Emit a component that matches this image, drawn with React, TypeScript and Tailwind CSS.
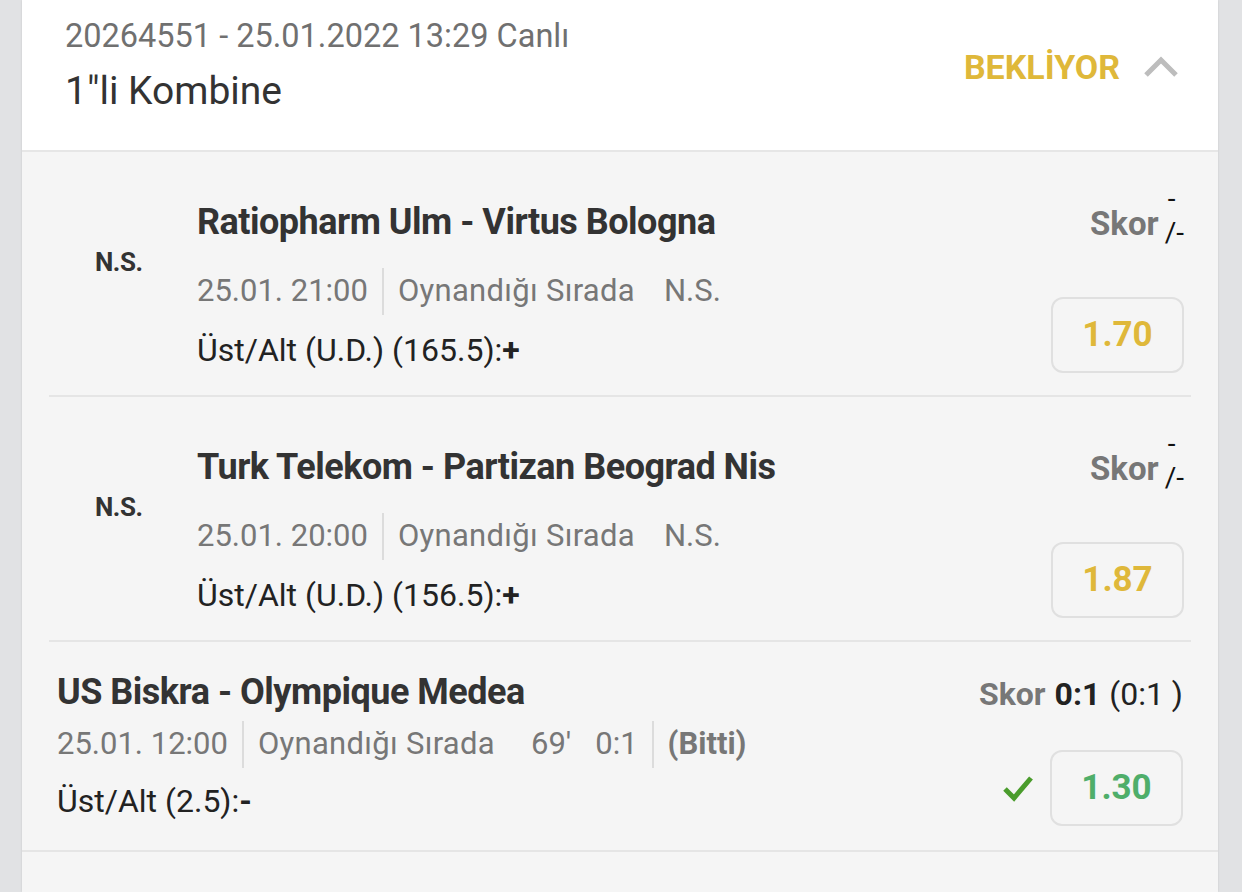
import React from 'react';

const gold = 'text-[#dfb83a]';

const Sep = () => <span className="mx-[14px] inline-block h-[47px] w-[2px] bg-[#dcdcdc]" />;

const Odds: React.FC<{ value: string; color: string }> = ({ value, color }) => (
  <div className={`flex h-[76px] w-[133px] items-center justify-center rounded-[12px] border-2 border-[#e0e0e0] text-[35px] font-bold ${color}`}>
    {value}
  </div>
);

const EmptyScore = () => (
  <div className="flex h-[40px] items-center justify-end">
    <span className="text-[33px] font-bold text-[#777]">Skor</span>
    <span className="ml-[6px] flex flex-col text-[28px] leading-[28px] text-[#111]">
      <span className="-mt-[16px] pl-[3px]">-</span>
      <span className="mt-[6px]">/-</span>
    </span>
  </div>
);

const PendingRow: React.FC<{ title: string; time: string; market: string; odds: string }> = ({ title, time, market, odds }) => (
  <div className="mx-[27px] flex h-[245px] border-b-2 border-[#e5e5e5]">
    <div className="w-[148px] pl-[46px] pt-[95px]">
      <span className="text-[26px] font-bold leading-[30px] tracking-[-0.5px] text-[#333]">N.S.</span>
    </div>
    <div className="flex-1 pt-[48px]">
      <div className="h-[44px] text-[36px] font-bold leading-[44px] tracking-[-0.5px] text-[#333]">{title}</div>
      <div className="mt-[22px] flex h-[50px] items-center text-[31px] text-[#777]">
        <span>{time}</span>
        <Sep />
        <span className="tracking-[0.3px]">Oynandığı Sırada</span>
        <span className="ml-[29px]">N.S.</span>
      </div>
      <div className="mt-[12px] h-[44px] text-[32px] leading-[44px] text-[#222]">
        {market}
        <span className="font-bold">+</span>
      </div>
    </div>
    <div className="flex flex-col items-end pr-[7px] pt-[52px]">
      <EmptyScore />
      <div className="mt-[53px]">
        <Odds value={odds} color={gold} />
      </div>
    </div>
  </div>
);

export default function App() {
  return (
    <div className="min-h-screen bg-[#e1e2e4] pl-[22px] pr-[24px]" style={{ fontFamily: 'Roboto, "Noto Sans", sans-serif' }}>
      <div className="min-h-screen bg-[#f5f5f5] shadow-[0_0_2px_rgba(0,0,0,0.12)]">
        {/* header */}
        <div className="flex h-[152px] items-start border-b-2 border-[#e6e6e6] bg-white pl-[43px] pr-[40px]">
          <div className="flex-1 pt-[14px]">
            <div className="h-[44px] text-[32.5px] leading-[44px] text-[#707070]">20264551 - 25.01.2022 13:29 Canlı</div>
            <div className="mt-[8px] h-[50px] text-[39px] leading-[50px] text-[#333]">1"li Kombine</div>
          </div>
          <div className="flex items-center pt-[46px]">
            <span className={`text-[34px] font-bold leading-[42px] ${gold}`}>BEKLİYOR</span>
            <svg className="ml-[24px]" width="34" height="22" viewBox="0 0 34 22" fill="none">
              <polyline points="2,19 17,4 32,19" stroke="#bdbdbd" strokeWidth="5" />
            </svg>
          </div>
        </div>

        <PendingRow title="Ratiopharm Ulm - Virtus Bologna" time="25.01. 21:00" market="Üst/Alt (U.D.) (165.5):" odds="1.70" />
        <PendingRow title="Turk Telekom - Partizan Beograd Nis" time="25.01. 20:00" market="Üst/Alt (U.D.) (156.5):" odds="1.87" />

        {/* finished row */}
        <div className="flex h-[210px] border-b-2 border-[#e5e5e5] pl-[35px] pr-[35px]">
          <div className="flex-1 pt-[28px]">
            <div className="h-[44px] text-[36px] font-bold leading-[44px] tracking-[-0.5px] text-[#333]">US Biskra - Olympique Medea</div>
            <div className="mt-[5px] flex h-[50px] items-center text-[31px] text-[#777]">
              <span>25.01. 12:00</span>
              <Sep />
              <span className="tracking-[0.3px]">Oynandığı Sırada</span>
              <span className="ml-[36px]">69'</span>
              <span className="ml-[24px]">0:1</span>
              <Sep />
              <span className="font-bold">(Bitti)</span>
            </div>
            <div className="mt-[10px] h-[44px] text-[32px] leading-[44px] text-[#222]">
              Üst/Alt (2.5):<span className="font-bold">-</span>
            </div>
          </div>
          <div className="flex flex-col items-end pt-[32px]">
            <div className="flex h-[40px] items-center text-[32px] text-[#222]">
              <span className="font-bold text-[#777]">Skor</span>
              <span className="ml-[9px] font-bold">0:1</span>
              <span className="ml-[9px]">(0:1 )</span>
            </div>
            <div className="mt-[36px] flex items-center">
              <svg className="mr-[16px]" width="32" height="28" viewBox="0 0 32 28" fill="none">
                <polyline points="3,15 12,24 29,4" stroke="#4a9c2c" strokeWidth="5" />
              </svg>
              <Odds value="1.30" color="text-[#4fae6a]" />
            </div>
          </div>
        </div>
      </div>
    </div>
  );
}
